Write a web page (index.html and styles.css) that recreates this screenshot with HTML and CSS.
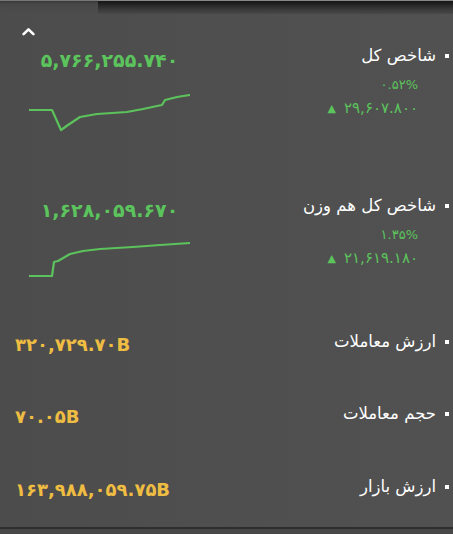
FILE: index.html
```html
<!DOCTYPE html>
<html lang="fa">
<head>
<meta charset="utf-8">
<link rel="stylesheet" href="styles.css">
</head>
<body>
<div class="panel">
  <div class="topbar">
    <div class="topbar-left"></div>
    <div class="topbar-right"></div>
  </div>
  <div class="chevron">
    <svg width="13" height="9" viewBox="0 0 13 9"><path d="M1.6 7.2 L6.5 2.3 L11.4 7.2" fill="none" stroke="#fff" stroke-width="2.6" stroke-linecap="round" stroke-linejoin="round"/></svg>
  </div>

  <div class="row row-index">
    <div class="left">
      <div class="value green">۵,۷۶۶,۲۵۵.۷۴۰</div>
      <svg class="spark spark1" width="161" height="38" viewBox="0 0 161 38"><polyline points="0,16 23,16 32,36 39,31 51,23 68,20 98,18 114,15 128,12 133,11 136,6 148,3 161,1" fill="none" stroke="#5cc25c" stroke-width="2.2" stroke-linejoin="round" stroke-linecap="round"/></svg>
    </div>
    <div class="right">
      <div class="label">شاخص کل</div>
      <div class="pct">۰.۵۲%</div>
      <div class="chg"><span class="tri">▲</span>۲۹,۶۰۷.۸۰۰</div>
    </div>
  </div>

  <div class="row row-index row2">
    <div class="left">
      <div class="value green">۱,۶۲۸,۰۵۹.۶۷۰</div>
      <svg class="spark spark2" width="161" height="37" viewBox="0 0 161 37"><polyline points="0,35 23,35 25,21 29,20 41,13 54,10 71,8 104,6 131,4 161,2" fill="none" stroke="#5cc25c" stroke-width="2.2" stroke-linejoin="round" stroke-linecap="round"/></svg>
    </div>
    <div class="right">
      <div class="label">شاخص کل هم وزن</div>
      <div class="pct">۱.۳۵%</div>
      <div class="chg"><span class="tri">▲</span>۲۱,۶۱۹.۱۸۰</div>
    </div>
  </div>

  <div class="row row-stat row3">
    <div class="left"><div class="value gold">۳۲۰,۷۲۹.۷۰B</div></div>
    <div class="right"><div class="label">ارزش معاملات</div></div>
  </div>

  <div class="row row-stat row4">
    <div class="left"><div class="value gold">۷۰.۰۵B</div></div>
    <div class="right"><div class="label">حجم معاملات</div></div>
  </div>

  <div class="row row-stat row5">
    <div class="left"><div class="value gold">۱۶۳,۹۸۸,۰۵۹.۷۵B</div></div>
    <div class="right"><div class="label">ارزش بازار</div></div>
  </div>

  <div class="bottomline"></div>
</div>
</body>
</html>
```

FILE: styles.css
```css
html, body {
  margin: 0;
  padding: 0;
}
body {
  width: 453px;
  height: 534px;
  background: #4e4e4e;
  font-family: "DejaVu Sans", "Noto Sans", sans-serif;
  overflow: hidden;
}
.panel {
  width: 453px;
  height: 534px;
  display: flex;
  flex-direction: column;
  background: linear-gradient(90deg, #4c4c4c 0%, #4f4f4f 50%, #515151 100%);
}
.topbar {
  display: flex;
  height: 14px;
  flex: none;
}
.topbar-left {
  width: 98px;
  background: linear-gradient(180deg, #3a3a3a 0px, #484848 3px, #4d4d4d 14px);
  border-top: 1px solid #777;
}
.topbar-right {
  flex: 1;
  background: linear-gradient(180deg, #161616 0px, #222 3px, #383838 8px, #4c4c4c 14px);
  border-top: 1px solid #888;
}
.chevron {
  height: 10px;
  padding-left: 22px;
  margin-top: 13px;
  line-height: 0;
}
.row {
  display: flex;
  justify-content: space-between;
  align-items: flex-start;
}
.left {
  display: flex;
  flex-direction: column;
}
.right {
  display: flex;
  flex-direction: column;
  align-items: flex-end;
  padding-right: 4px;
}
.label {
  direction: rtl;
  color: #ffffff;
  font-size: 16.5px;
  line-height: 24px;
  height: 24px;
  display: flex;
  align-items: center;
}
.label::before {
  content: "";
  width: 4px;
  height: 4px;
  background: #ffffff;
  margin-left: 9px;
  flex: none;
}
.value {
  font-weight: bold;
  font-size: 19px;
  line-height: 24px;
  height: 24px;
  white-space: nowrap;
}
.green { color: #5cc45c; }
.gold { color: #eebd42; font-size: 18px; }

.row-index .left {
  width: 161px;
  margin-left: 29px;
  align-items: center;
}
.row-index .value {
  margin-top: 4px;
}
.row-index {
  margin-top: 7px;
}
.spark {
  display: block;
}
.spark1 { margin-top: 22px; }
.spark2 { margin-top: 19px; }
.pct, .chg {
  color: #5cc45c;
  font-size: 13px;
  line-height: 15px;
  margin-right: 31px;
  white-space: nowrap;
}
.pct { margin-top: 9px; }
.chg { margin-top: 9px; font-size: 15px; display: flex; align-items: center; }
.tri { font-size: 11px; margin-right: 8px; }

.row2 { margin-top: 62px; }

.row-stat .left {
  margin-left: 15px;
}
.row-stat .value {
  margin-top: 3px;
}
.row3 { margin-top: 52px; }
.row4 { margin-top: 45px; }
.row5 { margin-top: 46px; }

.bottomline {
  margin-top: auto;
  height: 5px;
  border-top: 2px solid #2e2e2e;
  background: #474747;
  flex: none;
}
```
